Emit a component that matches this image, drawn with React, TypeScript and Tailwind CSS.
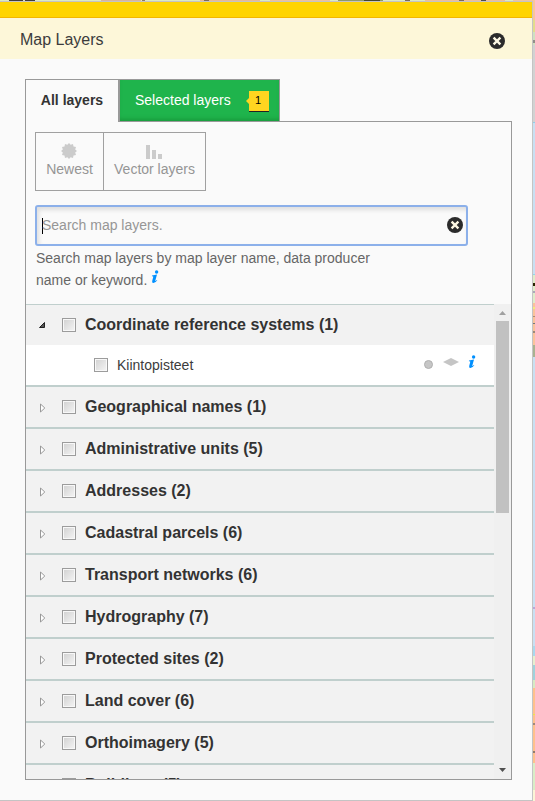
import React from "react";

const layers: string[] = [
  "Geographical names (1)",
  "Administrative units (5)",
  "Addresses (2)",
  "Cadastral parcels (6)",
  "Transport networks (6)",
  "Hydrography (7)",
  "Protected sites (2)",
  "Land cover (6)",
  "Orthoimagery (5)",
  "Buildings (5)",
];

function CloseIcon() {
  return (
    <svg width="16" height="16" viewBox="0 0 16 16" className="block shrink-0">
      <circle cx="8" cy="8" r="8" fill="#2b2b2b" />
      <path d="M5.4 5.4 10.6 10.6M10.6 5.4 5.4 10.6" stroke="#fdf8e4" strokeWidth="2.3" strokeLinecap="square" />
    </svg>
  );
}

function InfoIcon() {
  return (
    <svg width="8" height="14" viewBox="0 0 8 14" className="block shrink-0">
      <circle cx="5.6" cy="2" r="1.7" fill="#0090ff" />
      <path d="M1 5.5 6 4.5 4.2 10.9Q4.4 11.3 5.9 9.9L6.3 10.3Q4.4 13.1 2.3 13 .7 12.7 1.2 10.9L2.3 6.8Q2.2 6.1 .9 6.3Z" fill="#0090ff" />
    </svg>
  );
}

function Checkbox() {
  return (
    <div className="h-[14px] w-[14px] shrink-0 border border-[#9c9c9c] bg-[#f8f8f8] p-px">
      <div className="h-full w-full bg-linear-to-br from-[#d4d4d4] to-[#f2f2f2]" />
    </div>
  );
}

function Arrow({ open }: { open?: boolean }) {
  return (
    <svg width="8" height="10" viewBox="0 0 8 10" className="block shrink-0">
      {open ? (
        <path d="M6.5 2.5V7.5H1.5Z" fill="#555" stroke="#222" />
      ) : (
        <path d="M2.5 1 6.8 5 2.5 9Z" fill="#fff" stroke="#999" />
      )}
    </svg>
  );
}

function MapRight() {
  return (
    <svg width="2" height="801" viewBox="0 0 2 801" className="block shrink-0" shapeRendering="crispEdges">
      <rect width="2" height="801" fill="#c9dff2" />
      <rect width="2" height="20" fill="#fbc49a" />
      <rect y="20" width="2" height="12" fill="#e2dc8c" />
      <rect y="32" width="2" height="13" fill="#cfe0c0" />
      <rect y="40" width="2" height="3" fill="#918f88" />
      <rect y="45" width="2" height="77" fill="#d2d2d2" />
      <rect y="122" width="2" height="1" fill="#92cee8" />
      <rect y="274" width="2" height="1" fill="#92d5ec" />
      <rect y="275" width="2" height="28" fill="#dfecca" />
      <rect y="283" width="2" height="3" fill="#2a2500" />
      <rect y="291" width="2" height="2" fill="#aaa9b8" />
      <rect y="303" width="2" height="42" fill="#fbc29a" />
      <rect y="307" width="2" height="2" fill="#f2eb80" />
      <rect y="316" width="2" height="1" fill="#aa8b76" />
      <rect y="323" width="2" height="1" fill="#77777c" />
      <rect y="331" width="2" height="2" fill="#9c8879" />
      <rect y="345" width="2" height="12" fill="#a9b18f" />
      <rect y="607" width="2" height="2" fill="#b9a6d8" />
      <rect y="646" width="2" height="10" fill="#a9d8ee" />
      <rect y="656" width="2" height="9" fill="#e5efcf" />
      <rect y="665" width="2" height="15" fill="#9fd2dc" />
      <rect y="680" width="2" height="8" fill="#d7eac2" />
      <rect y="688" width="2" height="75" fill="#ffc08c" />
      <rect y="714" width="2" height="1" fill="#e9e84a" />
      <rect y="723" width="2" height="2" fill="#a38878" />
      <rect y="751" width="2" height="2" fill="#927a6c" />
      <rect y="763" width="2" height="27" fill="#d9edc6" />
      <rect y="790" width="2" height="11" fill="#fbf5d6" />
    </svg>
  );
}

function MapTop() {
  return (
    <svg width="533" height="1" viewBox="0 0 533 1" className="block shrink-0" shapeRendering="crispEdges">
      <rect width="533" height="1" fill="#dce8c4" />
      <rect x="9" width="26" height="1" fill="#403c3c" />
      <rect x="23" width="2" height="1" fill="#dcd8c0" />
      <rect x="101" width="40" height="1" fill="#d9b39c" />
      <rect x="142" width="3" height="1" fill="#8f7a66" />
      <rect x="200" width="60" height="1" fill="#e8b895" />
      <rect x="204" width="5" height="1" fill="#7a6a5c" />
      <rect x="270" width="60" height="1" fill="#eec09b" />
      <rect x="338" width="45" height="1" fill="#8e9868" />
      <rect x="364" width="16" height="1" fill="#42442f" />
      <rect x="405" width="5" height="1" fill="#786a5c" />
      <rect x="425" width="80" height="1" fill="#eebd98" />
      <rect x="459" width="5" height="1" fill="#7d675b" />
      <rect x="481" width="5" height="1" fill="#4d4c4c" />
      <rect x="513" width="20" height="1" fill="#eec3a0" />
    </svg>
  );
}

export default function App() {
  return (
    <div className="flex h-[801px] w-[535px] overflow-hidden bg-[#fafafa] font-['Liberation_Sans',Arial,sans-serif] text-[14px] text-[#3c3c3c]">
      <div className="flex w-[533px] shrink-0 flex-col">
        <MapTop />
        <div className="flex h-[800px] flex-col border-t border-r-1 border-b border-[#c4c4c4]">
          <div className="h-4 shrink-0 border-b border-[#f3b600] bg-[#ffd400]" />
          <div className="flex h-[41px] shrink-0 items-center justify-between bg-[#fdf7d9] pt-1 pr-[27px] pl-5">
            <h1 className="pb-0.5 text-[16px] leading-5">Map Layers</h1>
            <CloseIcon />
          </div>

          <div className="flex min-h-0 flex-1 flex-col pt-5 pr-5 pb-5 pl-[25px]">
            <div className="flex h-[42px] shrink-0">
              <div className="flex w-[93px] items-center justify-center border-t border-l border-[#999] pb-px text-[14px] font-bold text-[#333]">
                All layers
              </div>
              <div className="flex w-[162px] shrink-0 items-center border-t border-r border-l-2 border-[#999] bg-[#1fb44c] pl-[15px] text-white shadow-[inset_0_-4px_4px_-2px_#189a3c]">
                <span className="w-[96px]">Selected layers</span>
                <span className="ml-[15px] flex items-center pt-px">
                  <span className="h-0 w-0 border-y-[3px] border-r-[3px] border-y-transparent border-r-[#ffd520]" />
                  <span className="flex h-[21px] w-5 items-center justify-center border-b border-[#222] bg-[#ffd520] pr-[2px] text-[11px] text-black">1</span>
                </span>
              </div>
            </div>

            <div className="flex min-h-0 w-[487px] flex-1 flex-col border-r border-b border-l border-[#999]">
              <div className="ml-[92px] h-px shrink-0 bg-[#999]" />
              <div className="mt-[10px] ml-[9px] flex h-[59px] w-[171px] shrink-0 border border-[#a0a0a0] text-[#959595]">
                <button className="flex w-[68px] shrink-0 flex-col items-center border-r border-[#a0a0a0] pt-[10px]">
                  <svg width="16" height="16" viewBox="0 0 16 16" className="mr-px block">
                    <path d="M8 0 9.6 1.8 12 1 12.5 3.5 15 4 14.2 6.4 16 8 14.2 9.6 15 12 12.5 12.5 12 15 9.6 14.2 8 16 6.4 14.2 4 15 3.5 12.5 1 12 1.8 9.6 0 8 1.8 6.4 1 4 3.5 3.5 4 1 6.4 1.8Z" fill="#cbcbcb" />
                  </svg>
                  <span className="leading-5">Newest</span>
                </button>
                <button className="flex flex-1 flex-col items-center pt-[10px]">
                  <svg width="16" height="16" viewBox="0 0 16 16" className="mr-px block" shapeRendering="crispEdges">
                    <path d="M0 2h4v14H0zM6 7h4v9H6zM12 11h4v5h-4z" fill="#cbcbcb" />
                  </svg>
                  <span className="leading-5">Vector layers</span>
                </button>
              </div>

              <div className="mt-[14px] ml-[9px] flex h-[41px] w-[433px] shrink-0 items-center justify-between rounded-[3px] border-2 border-[#8cb0ea] pr-[3px] pl-[5px] text-[#969696] shadow-[inset_2px_3px_4px_#dedede]">
                <div className="flex items-center">
                  <span className="h-4 w-px bg-black" />
                  <span className="-ml-px">Search map layers.</span>
                </div>
                <div className="pb-[2px]"><CloseIcon /></div>
              </div>

              <div className="mt-[1px] ml-[10px] h-[57px] shrink-0 text-[14px] leading-[22px] text-[#666]">
                <p className="whitespace-nowrap">Search map layers by map layer name, data producer</p>
                <div className="flex">
                  <span>name or keyword.</span>
                  <span className="ml-1 pt-px"><InfoIcon /></span>
                </div>
              </div>

              <div className="flex min-h-0 flex-1">
                <div className="w-[468px] shrink-0 overflow-hidden">
                  <div className="flex h-[41px] items-center border-t border-[#c0cfcd] bg-[#f2f2f2] pl-3">
                    <Arrow open />
                    <div className="mr-[9px] ml-4"><Checkbox /></div>
                    <span className="text-[16px] font-bold text-[#333]">Coordinate reference systems (1)</span>
                  </div>
                  <div className="flex h-10 items-center bg-white pl-[68px]">
                    <Checkbox />
                    <span className="ml-[9px]">Kiintopisteet</span>
                    <div className="ml-auto flex items-center pr-[18px]">
                      <span className="mb-[1px] h-[9px] w-[9px] rounded-full border border-[#b0b0b0] bg-[#c6c6c6]" />
                      <svg width="16" height="8" viewBox="0 0 16 8" className="mb-[6px] ml-[10px] block">
                        <path d="M0 4 8 0 16 4 8 8Z" fill="#c5c5c5" />
                      </svg>
                      <span className="mb-[6px] ml-[9px]"><InfoIcon /></span>
                    </div>
                  </div>
                  {layers.map((name) => (
                    <div key={name} className="flex h-[42px] items-center border-t-2 border-[#c0cfcd] bg-[#f2f2f2] pl-3">
                      <span className="pt-0.5"><Arrow /></span>
                      <div className="mr-[9px] ml-4"><Checkbox /></div>
                      <span className="text-[16px] font-bold text-[#333]">{name}</span>
                    </div>
                  ))}
                </div>
                <div className="flex w-[17px] shrink-0 flex-col items-center bg-[#f0f0f0]">
                  <svg width="17" height="17" viewBox="0 0 17 17" className="block shrink-0">
                    <path d="M5 11 8.5 7 12 11Z" fill="#a0a0a0" />
                  </svg>
                  <div className="h-[192px] w-[13px] shrink-0 bg-[#c1c1c1]" />
                  <svg width="17" height="17" viewBox="0 0 17 17" className="mt-auto block shrink-0">
                    <path d="M5 6 8.5 10 12 6Z" fill="#505050" />
                  </svg>
                </div>
              </div>
            </div>
          </div>
        </div>
      </div>
      <MapRight />
    </div>
  );
}
